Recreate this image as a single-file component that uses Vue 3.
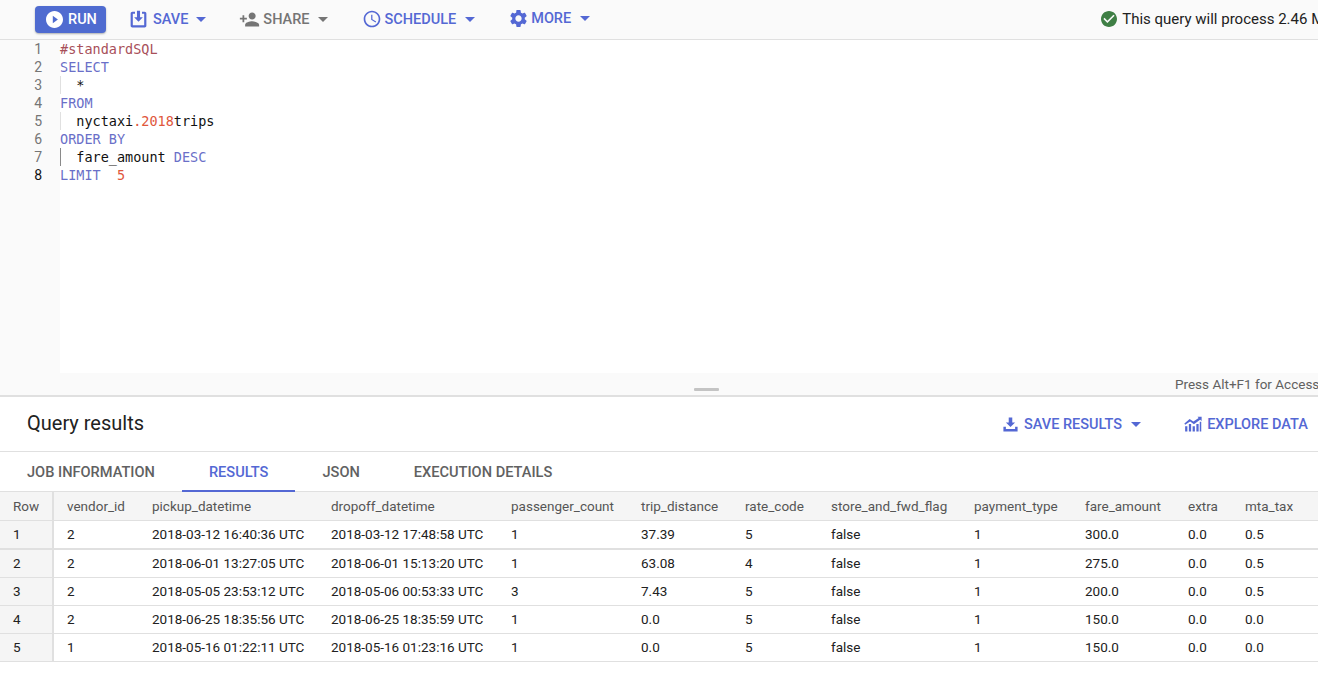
<script setup>
const icons = {
  save: 'M5 3h3v2.500H5.500v13h13v-13H16V3h3c1.100 0 2 .9 2 2v14c0 1.100-.9 2-2 2H5c-1.100 0-2-.9-2-2V5c0-1.100.9-2 2-2zm5.250-1h3.500v7.500H17l-5 5-5-5h3.250z',
  share: 'M15 12c2.210 0 4-1.790 4-4s-1.790-4-4-4-4 1.790-4 4 1.790 4 4 4zm-9-2V7H4v3H1v2h3v3h2v-3h3v-2H6zm9 4c-2.670 0-8 1.340-8 4v2h16v-2c0-2.660-5.330-4-8-4z',
  schedule: 'M11.990 2C6.470 2 2 6.480 2 12s4.470 10 9.990 10C17.520 22 22 17.520 22 12S17.520 2 11.990 2zM12 20c-4.420 0-8-3.580-8-8s3.580-8 8-8 8 3.580 8 8-3.580 8-8 8zm.5-13H11v6l5.250 3.150.750-1.230-4.500-2.670z',
  more: 'M19.140 12.940c.040-.300.060-.610.060-.940 0-.320-.020-.640-.070-.940l2.030-1.580a.490.490 0 0 0 .120-.610l-1.920-3.320a.488.488 0 0 0-.590-.220l-2.390.960c-.500-.380-1.030-.700-1.620-.940l-.360-2.540a.484.484 0 0 0-.480-.410h-3.840c-.240 0-.430.170-.470.410l-.360 2.540c-.590.240-1.130.570-1.620.940l-2.390-.960c-.220-.080-.470 0-.590.220L2.740 8.870c-.120.210-.080.470.120.610l2.030 1.580c-.050.300-.090.630-.090.940s.020.640.070.940l-2.030 1.580a.490.490 0 0 0-.120.610l1.920 3.320c.120.220.370.290.590.220l2.390-.960c.500.380 1.030.700 1.620.940l.360 2.540c.050.240.240.410.48.410h3.840c.240 0 .440-.170.470-.410l.360-2.540c.590-.240 1.130-.560 1.620-.940l2.390.960c.220.080.470 0 .590-.220l1.920-3.320c.120-.220.070-.470-.120-.610l-2.010-1.580zM12 15.600c-1.980 0-3.600-1.620-3.600-3.600s1.620-3.600 3.600-3.600 3.600 1.620 3.600 3.600-1.620 3.600-3.600 3.600z',
  download: 'M9.500 2h5v7h4l-6.500 6.500L5.500 9h4zM2 15h3.500v3.500h13V15H22v7H2z',
  explore: 'M1.500 22v-7h3v7zm5 0v-10h3v10zm5 0v-7h3v7zm5 0v-10h3v10zm4.500 0V9h2v13zM1.500 13l-1-1.800 7-6 5 3.500L19.500 4 18 2.200h5.500V8L21.500 6.200l-8.300 6-5-3.500z'
}

const toolbar = [
  { key: 'save', label: 'SAVE' },
  { key: 'share', label: 'SHARE', grey: true },
  { key: 'schedule', label: 'SCHEDULE' },
  { key: 'more', label: 'MORE', raised: true }
]

const lines = [
  { n: 1, parts: [['c', '#standardSQL']] },
  { n: 2, parts: [['k', 'SELECT']] },
  { n: 3, guide: 'soft', parts: [['p', '  *']] },
  { n: 4, parts: [['k', 'FROM']] },
  { n: 5, guide: 'soft', parts: [['p', '  nyctaxi'], ['o', '.2018'], ['p', 'trips']] },
  { n: 6, parts: [['k', 'ORDER BY']] },
  { n: 7, guide: 'dark', parts: [['p', '  fare_amount '], ['k', 'DESC']] },
  { n: 8, active: true, parts: [['k', 'LIMIT'], ['p', '  '], ['o', '5']] }
]

const tabs = ['JOB INFORMATION', 'RESULTS', 'JSON', 'EXECUTION DETAILS']

const headers = ['Row', 'vendor_id', 'pickup_datetime', 'dropoff_datetime', 'passenger_count', 'trip_distance', 'rate_code', 'store_and_fwd_flag', 'payment_type', 'fare_amount', 'extra', 'mta_tax']

const rows = [
  ['1', '2', '2018-03-12 16:40:36 UTC', '2018-03-12 17:48:58 UTC', '1', '37.39', '5', 'false', '1', '300.0', '0.0', '0.5'],
  ['2', '2', '2018-06-01 13:27:05 UTC', '2018-06-01 15:13:20 UTC', '1', '63.08', '4', 'false', '1', '275.0', '0.0', '0.5'],
  ['3', '2', '2018-05-05 23:53:12 UTC', '2018-05-06 00:53:33 UTC', '3', '7.43', '5', 'false', '1', '200.0', '0.0', '0.5'],
  ['4', '2', '2018-06-25 18:35:56 UTC', '2018-06-25 18:35:59 UTC', '1', '0.0', '5', 'false', '1', '150.0', '0.0', '0.0'],
  ['5', '1', '2018-05-16 01:22:11 UTC', '2018-05-16 01:23:16 UTC', '1', '0.0', '5', 'false', '1', '150.0', '0.0', '0.0']
]
</script>

<template>
  <div class="page">
    <header class="toolbar">
      <button class="run">
        <svg class="run-icon" viewBox="2 2 20 20"><path d="M12 2C6.480 2 2 6.480 2 12s4.480 10 10 10 10-4.480 10-10S17.520 2 12 2zm-2 14.500v-9l6 4.500-6 4.500z" /></svg>
        RUN
      </button>
      <button v-for="b in toolbar" :key="b.key" class="tool" :class="['t-' + b.key, { grey: b.grey, raised: b.raised }]">
        <svg class="tool-icon" viewBox="0 0 24 24"><path :d="icons[b.key]" /></svg>
        <span>{{ b.label }}</span>
        <i class="caret"></i>
      </button>
      <div class="status">
        <svg class="status-icon" viewBox="2 2 20 20"><path d="M12 2C6.480 2 2 6.480 2 12s4.480 10 10 10 10-4.480 10-10S17.520 2 12 2zm-2 15l-5-5 1.410-1.410L10 14.170l7.590-7.590L19 8l-9 9z" /></svg>
        <span>This query will process 2.46 MB when run.</span>
      </div>
    </header>

    <section class="editor">
      <div v-for="l in lines" :key="l.n" class="line">
        <div class="num" :class="{ active: l.active }">{{ l.n }}</div>
        <div class="code" :class="l.guide"><span v-for="(p, i) in l.parts" :key="i" :class="p[0]">{{ p[1] }}</span></div>
      </div>
      <div class="filler"></div>
    </section>

    <div class="statusline">
      <i class="handle"></i>
      <span class="hint">Press Alt+F1 for Accessibility Options</span>
    </div>

    <section class="results-head">
      <h2>Query results</h2>
      <button class="tool act-save">
        <svg class="act-icon" viewBox="0 0 24 24"><path :d="icons.download" /></svg>
        <span>SAVE RESULTS</span>
        <i class="caret"></i>
      </button>
      <button class="tool act-explore">
        <svg class="act-icon" viewBox="0 0 24 24"><path :d="icons.explore" /></svg>
        <span>EXPLORE DATA</span>
      </button>
    </section>

    <nav class="tabs">
      <div v-for="t in tabs" :key="t" class="tab" :class="{ on: t === 'RESULTS' }">{{ t }}</div>
    </nav>

    <div class="table">
      <div class="row head">
        <div v-for="h in headers" :key="h" class="cell">{{ h }}</div>
      </div>
      <div v-for="(r, ri) in rows" :key="ri" class="row" :class="{ first: ri === 0 }">
        <div v-for="(v, ci) in r" :key="ci" class="cell">{{ v }}</div>
      </div>
    </div>
  </div>
</template>

<style>
html, body { margin: 0; background: #fff; overflow: hidden; }
</style>

<style scoped>
.page {
  width: 1318px;
  height: 693px;
  overflow: hidden;
  display: flex;
  flex-direction: column;
  font-family: Roboto, "Liberation Sans", sans-serif;
  color: #212121;
  background: #fff;
}
button {
  border: 0;
  background: none;
  padding: 0;
  font: inherit;
  cursor: pointer;
}
.toolbar {
  flex: none;
  height: 38px;
  padding: 0 0 1px 35px;
  display: flex;
  align-items: center;
  background: #fafafa;
  border-bottom: 1px solid #e0e0e0;
  white-space: nowrap;
}
.run {
  width: 71px;
  height: 27px;
  margin-right: 22px;
  flex: none;
  display: flex;
  align-items: center;
  gap: 5px;
  padding-left: 11px;
  box-sizing: border-box;
  background: #4f6bd0;
  color: #fff;
  font-size: 14.5px;
  font-weight: 500;
  border-radius: 4px;
  box-shadow: 0 1px 2px rgba(60, 64, 67, .4);
}
.run-icon { width: 17px; height: 17px; fill: #fff; }
.tool {
  flex: none;
  display: flex;
  align-items: center;
  color: #5468d4;
  font-size: 14.5px;
  font-weight: 500;
}
.tool.grey { color: #757575; }
.tool.raised { transform: translateY(-1px); }
.tool-icon { width: 21px; height: 21px; fill: currentColor; margin-right: 4px; }
.caret {
  width: 0;
  height: 0;
  margin-left: 8px;
  border-left: 5px solid transparent;
  border-right: 5px solid transparent;
  border-top: 5px solid currentColor;
}
.t-save { margin-right: 33px; }
.t-share { margin-right: 34px; }
.t-share .tool-icon { margin-right: 3px; }
.t-schedule { margin-right: 33px; }
.t-schedule .tool-icon { width: 20px; height: 20px; margin-right: 3px; }
.t-schedule .caret, .t-more .caret { margin-left: 9px; }
.t-more .tool-icon { margin-right: 2px; }
.status {
  margin-left: 511px;
  flex: none;
  display: flex;
  align-items: center;
  gap: 5px;
  font-size: 15px;
  color: #212121;
}
.status-icon { width: 16px; height: 16px; fill: #3f7f45; }

.editor {
  flex: none;
  height: 333px;
  display: flex;
  flex-direction: column;
  font-family: "DejaVu Sans Mono", monospace;
  font-size: 13.5px;
  line-height: 18px;
}
.line { flex: none; height: 18px; display: flex; }
.num {
  flex: none;
  width: 42px;
  padding-right: 18px;
  text-align: right;
  background: #fafafa;
  color: #757575;
  font-family: Roboto, sans-serif;
  font-size: 14px;
}
.num.active { color: #111; }
.code {
  flex: 1;
  white-space: pre;
  color: #111;
  box-sizing: border-box;
}
.code.soft { box-shadow: inset 1px 0 0 #e0e0e0; }
.code.dark { box-shadow: inset 1px 0 0 #8a8a8a; }
.c { color: #a8505a; }
.k { color: #6a6fc8; }
.o { color: #e0573c; }
.p { color: #111; }
.filler {
  flex: 1;
  width: 60px;
  background: #fafafa;
}

.statusline {
  flex: none;
  height: 22px;
  position: relative;
  background: #fafafa;
  border-bottom: 2px solid #e0e0e0;
  display: flex;
  align-items: center;
  overflow: hidden;
}
.handle {
  position: absolute;
  left: 694px;
  top: 15px;
  width: 25px;
  height: 3px;
  background: #c4c4c4;
  border-radius: 1px;
}
.hint {
  margin-left: 1175px;
  font-size: 13.5px;
  line-height: 22px;
  color: #616161;
  white-space: nowrap;
}

.results-head {
  flex: none;
  height: 55px;
  padding-left: 27px;
  box-sizing: border-box;
  display: flex;
  align-items: center;
  border-bottom: 1px solid #e0e0e0;
}
.results-head h2 {
  margin: 0 0 2px;
  width: 975px;
  flex: none;
  font-size: 20px;
  font-weight: 400;
  color: #212121;
}
.act-icon { width: 17px; height: 17px; fill: currentColor; margin-right: 5px; }
.act-save { margin-right: 43px; }
.act-save .caret { margin-left: 9px; }
.act-explore .act-icon { width: 18px; height: 18px; }

.tabs {
  flex: none;
  height: 39px;
  display: flex;
  border-bottom: 1px solid #e0e0e0;
}
.tab {
  padding: 0 27px;
  height: 40px;
  box-sizing: border-box;
  line-height: 40px;
  font-size: 14.6px;
  font-weight: 500;
  color: #616161;
  white-space: nowrap;
}
.tab.on {
  color: #5468d4;
  border-bottom: 2px solid #5468d4;
}

.table { flex: none; font-size: 13.5px; }
.row {
  display: grid;
  grid-template-columns: 54px 84px 179px 180px 130px 104px 86px 143px 111px 103px 57px 87px;
  height: 28px;
  box-sizing: border-box;
  border-bottom: 1px solid #e0e0e0;
}
.row.head {
  height: 29px;
  background: #f5f5f5;
  color: #555;
}
.row.first { height: 29px; border-bottom-width: 2px; }
.cell {
  padding-left: 14px;
  line-height: 26px;
  white-space: nowrap;
}
.cell:first-child {
  padding-left: 13px;
  background: #f5f5f5;
  border-right: 2px solid #e0e0e0;
  box-sizing: border-box;
}
.cell:nth-child(2) { padding-left: 13px; }
.head .cell { line-height: 28px; }
</style>
